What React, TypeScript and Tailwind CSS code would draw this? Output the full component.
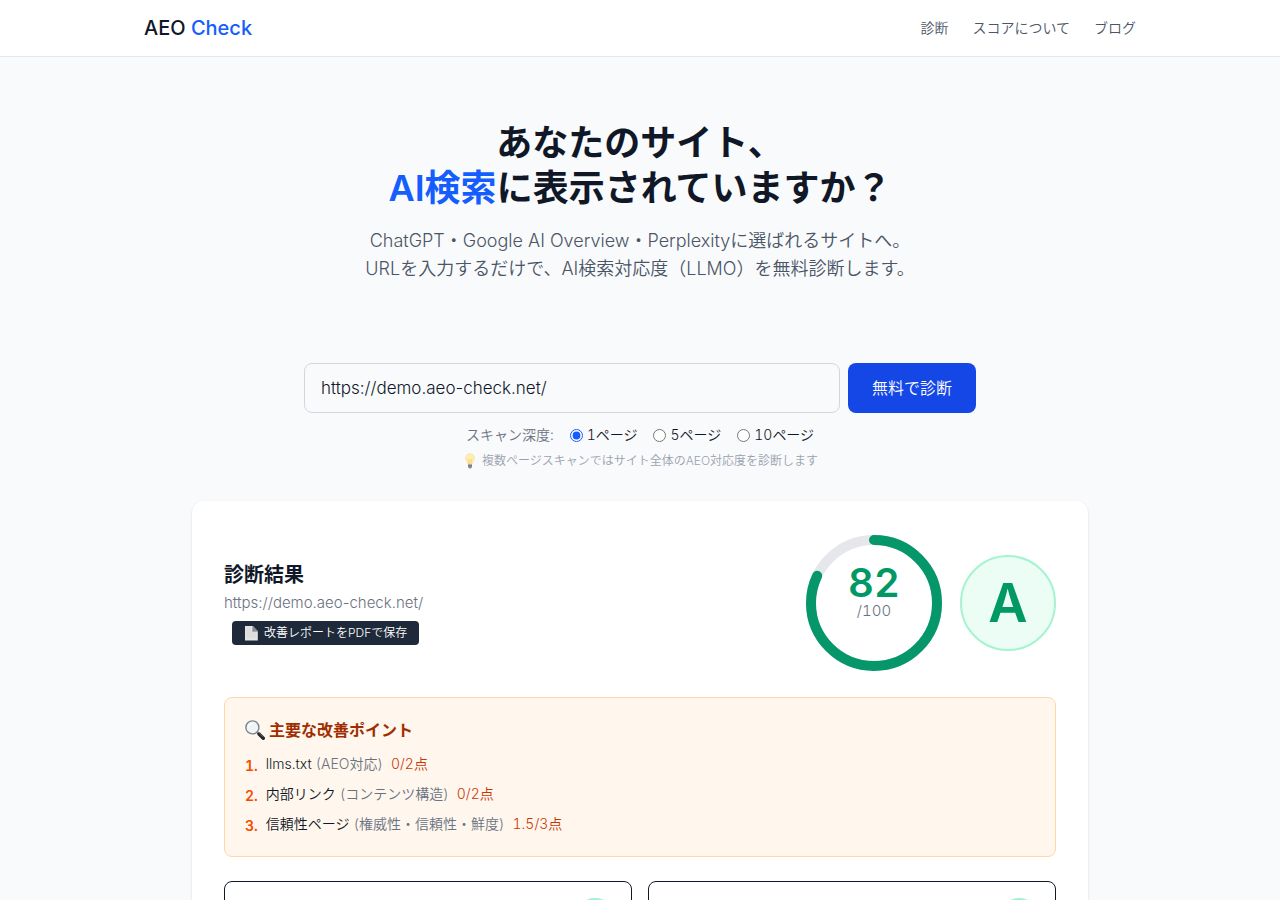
import { useState } from 'react'

const navLinks = [
  { label: '診断', href: '/' },
  { label: 'スコアについて', href: '/about-score' },
  { label: 'ブログ', href: '/blog' },
]

const depths = [1, 5, 10]

const improvements = [
  { name: 'llms.txt', category: 'AEO対応', score: '0/2点' },
  { name: '内部リンク', category: 'コンテンツ構造', score: '0/2点' },
  { name: '信頼性ページ', category: '権威性・信頼性・鮮度', score: '1.5/3点' },
]

export default function App() {
  return (
    <div className="min-h-screen bg-[#f9fafc] font-['Inter','Noto_Sans_CJK_JP',sans-serif] font-[350] text-gray-900">
      <Header />
      <main className="mx-auto max-w-4xl">
        <Hero />
        <ScanForm />
        <Result score={82} />
      </main>
    </div>
  )
}

function Header() {
  return (
    <header className="border-b border-gray-200 bg-white">
      <div className="mx-auto flex h-14 max-w-5xl items-center justify-between px-4">
        <a href="/" className="text-xl font-medium">
          AEO <span className="text-blue-600">Check</span>
        </a>
        <nav className="flex gap-6 text-sm text-gray-600">
          {navLinks.map((link) => (
            <a key={link.href} href={link.href}>
              {link.label}
            </a>
          ))}
        </nav>
      </div>
    </header>
  )
}

function Hero() {
  return (
    <section className="px-4 py-16 text-center">
      <h1 className="mb-4 text-4xl leading-tight font-semibold">
        あなたのサイト、
        <br />
        <span className="text-blue-600">AI検索</span>に表示されていますか？
      </h1>
      <p className="text-lg text-gray-600">
        ChatGPT・Google AI Overview・Perplexityに選ばれるサイトへ。
        <br />
        URLを入力するだけで、AI検索対応度（LLMO）を無料診断します。
      </p>
    </section>
  )
}

function ScanForm() {
  const [url, setUrl] = useState('https://demo.aeo-check.net/')
  const [depth, setDepth] = useState(1)

  return (
    <form className="mx-auto max-w-2xl pt-4" onSubmit={(e) => e.preventDefault()}>
      <div className="flex gap-2">
        <input
          type="url"
          aria-label="診断するURL"
          value={url}
          onChange={(e) => setUrl(e.target.value)}
          className="min-w-0 flex-1 rounded-lg border border-gray-300 px-4 py-3 text-[17px] leading-6"
        />
        <button type="submit" className="rounded-lg bg-blue-700 px-6 py-3 text-white">
          無料で診断
        </button>
      </div>
      <div className="mt-3 flex items-center justify-center gap-4 text-sm tabular-nums">
        <span className="text-gray-500">スキャン深度:</span>
        {depths.map((n) => (
          <label key={n} className="flex items-center gap-1">
            <input
              type="radio"
              name="depth"
              checked={depth === n}
              onChange={() => setDepth(n)}
              className="accent-blue-600"
            />
            {n}ページ
          </label>
        ))}
      </div>
      <p className="mt-2 flex items-center justify-center gap-1 text-xs text-gray-400">
        <BulbIcon className="h-4 w-4" />
        複数ページスキャンではサイト全体のAEO対応度を診断します
      </p>
    </form>
  )
}

function Result({ score }: { score: number }) {
  return (
    <section className="mt-8 rounded-xl bg-white p-8 shadow-sm">
      <div className="mb-6 flex items-center justify-between">
        <div>
          <h2 className="text-xl font-semibold">診断結果</h2>
          <p className="mt-1 text-[15px] leading-5 text-gray-500">https://demo.aeo-check.net/</p>
          <button className="mt-2 ml-2 flex items-center gap-1 rounded bg-gray-800 px-3 py-1 text-xs text-white">
            <PageIcon className="h-4 w-4" />
            改善レポートをPDFで保存
          </button>
        </div>
        <div className="flex items-center gap-4">
          <ScoreRing score={score} />
          <div className="flex h-24 w-24 items-center justify-center rounded-full border-2 border-emerald-200 bg-emerald-50 text-[54px] leading-none font-semibold text-emerald-600">
            A
          </div>
        </div>
      </div>

      <div className="mb-6 rounded-lg border border-orange-200 bg-orange-50 p-5">
        <h3 className="mb-3 flex items-center gap-1 font-semibold text-orange-800">
          <MagnifierIcon className="h-5 w-5" />
          主要な改善ポイント
        </h3>
        <ol className="space-y-2 text-sm tabular-nums">
          {improvements.map((item, i) => (
            <li key={item.name} className="flex items-start gap-2">
              <span className="mt-0.5 font-semibold text-orange-600">{i + 1}.</span>
              <div>
                <span>{item.name}</span>
                <span className="ml-1 text-gray-500">({item.category})</span>
                <span className="ml-2 text-orange-700">{item.score}</span>
              </div>
            </li>
          ))}
        </ol>
      </div>

      <div className="grid grid-cols-2 gap-4">
        <CategoryCard title="コンテンツ構造" grade="A" />
        <CategoryCard title="AEO対応" grade="A" />
      </div>
    </section>
  )
}

function ScoreRing({ score }: { score: number }) {
  const radius = 63
  const length = 2 * Math.PI * radius

  return (
    <div className="grid h-[140px] w-[140px] place-items-center">
      <svg viewBox="0 0 140 140" fill="none" className="col-start-1 row-start-1 -rotate-90" aria-hidden="true">
        <circle cx="70" cy="70" r={radius} stroke="#e5e7eb" strokeWidth="10" />
        <circle
          cx="70"
          cy="70"
          r={radius}
          stroke="#059669"
          strokeWidth="10"
          strokeLinecap="round"
          strokeDasharray={length}
          strokeDashoffset={length * (1 - score / 100)}
        />
      </svg>
      <div className="col-start-1 row-start-1 pb-5 text-center tabular-nums">
        <div className="text-[40px] leading-9 font-semibold text-emerald-600">{score}</div>
        <div className="text-[15px] leading-5 font-light text-gray-500">/100</div>
      </div>
    </div>
  )
}

function CategoryCard({ title, grade }: { title: string; grade: string }) {
  return (
    <div className="flex items-center justify-between rounded-lg border border-gray-900 p-4">
      <h4 className="font-semibold">{title}</h4>
      <span className="flex h-10 w-10 items-center justify-center rounded-full border-2 border-emerald-200 bg-emerald-50 font-semibold text-emerald-600">
        {grade}
      </span>
    </div>
  )
}

function BulbIcon({ className }: { className?: string }) {
  return (
    <svg viewBox="0 0 16 16" className={className} aria-hidden="true">
      <path d="M8 .8a4.400 4.400 0 0 0-4.400 4.500c0 2 1.200 2.900 1.900 4.400.2.500.3 1 .4 1.600h4.200c.1-.6.2-1.100.4-1.600.7-1.500 1.900-2.400 1.900-4.400A4.400 4.400 0 0 0 8 .8z" fill="#fdeeb0" stroke="#f3d98b" strokeWidth=".6" />
      <path d="M7 11V7.200L6.300 6M9 11V7.200L9.700 6" fill="none" stroke="#e9bd58" strokeWidth=".6" />
      <path d="M6 11.300h4v2.800L9 15.600H7l-1-1.500z" fill="#94989c" />
      <path d="M6 12.500h4M6.200 13.800h3.600" stroke="#676b6f" strokeWidth=".6" />
    </svg>
  )
}

function PageIcon({ className }: { className?: string }) {
  return (
    <svg viewBox="0 0 16 16" className={className} aria-hidden="true">
      <path d="M1 1h7.800l5 5.200V15.500H1z" fill="#e4e4e4" />
      <path d="M8.800 1v5.200h5z" fill="#55585c" />
      <path d="M8.800 1 8.300 6.700l5.500-.5z" fill="#8b8d90" />
      <path d="M2.800 4h4M2.800 6h4M2.800 8h9M2.800 10h9M2.800 12h9" stroke="#cdcdcd" strokeWidth=".6" />
    </svg>
  )
}

function MagnifierIcon({ className }: { className?: string }) {
  return (
    <svg viewBox="0 0 20 20" fill="none" className={className} aria-hidden="true">
      <path d="m11.800 11.800 2.500 2.500" stroke="#8c9298" strokeWidth="2" />
      <path d="m14 14 4.300 4.300" stroke="#24282b" strokeWidth="3.400" strokeLinecap="round" />
      <path d="m14.500 13.400 3.500 3.500" stroke="#6c7277" strokeWidth=".8" />
      <circle cx="7.400" cy="7.400" r="6.500" fill="#f0f4f5" stroke="#7b858d" strokeWidth="1.400" />
      <path d="M3.500 7.400a4 4 0 0 1 4-4" stroke="#fff" strokeWidth="1.200" strokeLinecap="round" />
    </svg>
  )
}
